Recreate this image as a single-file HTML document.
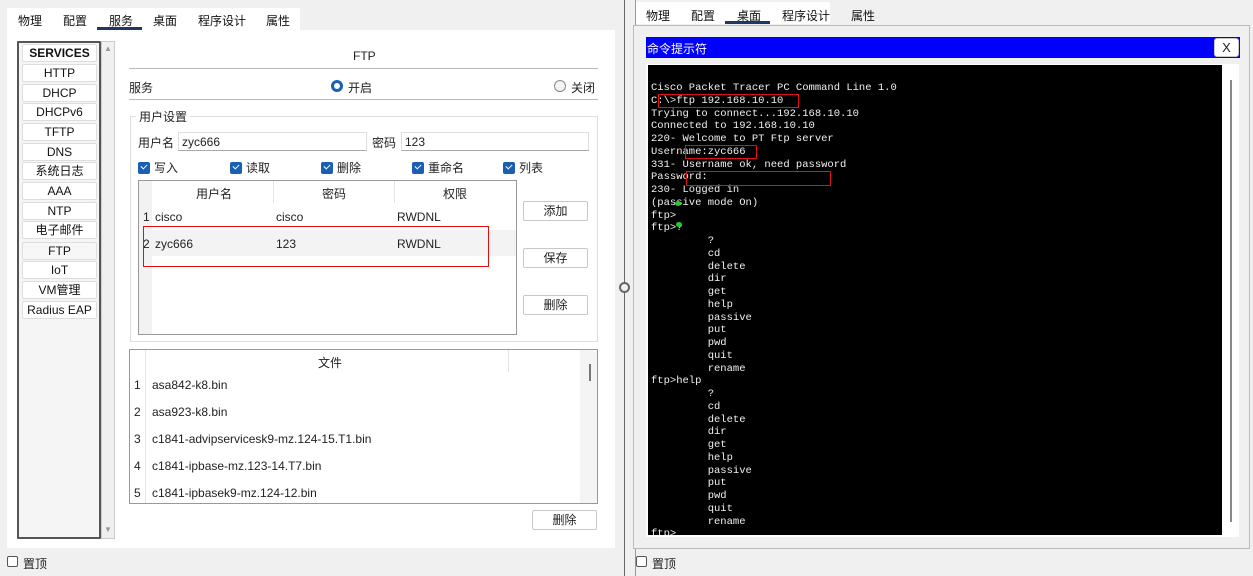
<!DOCTYPE html>
<html><head><meta charset="utf-8"><style>
*{box-sizing:border-box;margin:0;padding:0}
body{width:1253px;height:576px;background:#f0f0f0;position:relative;overflow:hidden;font-family:"Liberation Sans","Noto Sans CJK SC",sans-serif;font-size:12px;color:#222}
.a{position:absolute}
.tab{position:absolute;font-size:12px;color:#111}
.svc{position:absolute;left:22px;width:75px;height:18px;background:#fff;border:1px solid #ddd;border-radius:2px;text-align:center;font-size:12px;line-height:17px;color:#111}
.btn{position:absolute;background:#fff;border:1px solid #c8c8c8;border-radius:2px;text-align:center;font-size:12px;line-height:18px}
.cb{display:inline-block;width:12px;height:12px;background:#1a5fb4;border-radius:2px;vertical-align:-2px;margin-right:4px;position:relative}
.cb:after{content:"";position:absolute;left:3px;top:2px;width:5px;height:3px;border-left:1.5px solid #fff;border-bottom:1.5px solid #fff;transform:rotate(-45deg)}
.term{position:absolute;left:648px;top:65px;width:574px;height:470px;background:#000;overflow:hidden;font-family:"Liberation Mono",monospace;font-size:10.5px;color:#f0f0f0;white-space:pre;line-height:12.75px;padding:17px 0 0 3px}
.rb{position:absolute;border:1.5px solid #e01010}
</style></head><body>
<!-- LEFT -->
<div class="a" style="left:7px;top:8px;width:293px;height:22px;background:#fff"></div>
<div class="tab" style="left:18px;top:12px">物理</div>
<div class="tab" style="left:63px;top:12px">配置</div>
<div class="tab" style="left:109px;top:12px">服务</div>
<div class="a" style="left:97px;top:27px;width:45px;height:3px;background:#1c3966"></div>
<div class="tab" style="left:153px;top:12px">桌面</div>
<div class="tab" style="left:198px;top:12px">程序设计</div>
<div class="tab" style="left:266px;top:12px">属性</div>
<div class="a" style="left:7px;top:30px;width:608px;height:518px;background:#fff"></div>
<div class="a" style="left:17px;top:41px;width:84px;height:498px;background:#f5f5f5;border:2px solid #555;border-radius:1px"></div>
<div class="a" style="left:101px;top:41px;width:14px;height:498px;background:#f0f0f0;border:1px solid #ccc"></div>
<div class="a" style="left:104px;top:44px;font-size:8px;color:#999">▲</div>
<div class="a" style="left:104px;top:525px;font-size:8px;color:#999">▼</div>
<div class="svc" style="top:44px;font-weight:bold">SERVICES</div>
<div class="svc" style="top:64px">HTTP</div>
<div class="svc" style="top:84px">DHCP</div>
<div class="svc" style="top:103px">DHCPv6</div>
<div class="svc" style="top:123px">TFTP</div>
<div class="svc" style="top:143px">DNS</div>
<div class="svc" style="top:162px">系统日志</div>
<div class="svc" style="top:182px">AAA</div>
<div class="svc" style="top:202px">NTP</div>
<div class="svc" style="top:221px">电子邮件</div>
<div class="svc" style="top:242px;background:#f7f7f7">FTP</div>
<div class="svc" style="top:261px">IoT</div>
<div class="svc" style="top:281px">VM管理</div>
<div class="svc" style="top:301px">Radius EAP</div>

<div class="a" style="left:353px;top:49px;font-size:12px">FTP</div>
<div class="a" style="left:129px;top:68px;width:469px;height:1px;background:#bbb"></div>
<div class="a" style="left:129px;top:79px">服务</div>
<div class="a" style="left:331px;top:80px;width:12px;height:12px;border:3px solid #1a5fb4;border-radius:50%"></div>
<div class="a" style="left:348px;top:79px">开启</div>
<div class="a" style="left:554px;top:80px;width:12px;height:12px;border:1px solid #888;border-radius:50%;background:#f4f4f4"></div>
<div class="a" style="left:571px;top:79px">关闭</div>
<div class="a" style="left:129px;top:99px;width:469px;height:1px;background:#bbb"></div>

<div class="a" style="left:130px;top:116px;width:468px;height:226px;border:1px solid #ddd"></div>
<div class="a" style="left:136px;top:108px;background:#fff;padding:0 3px">用户设置</div>
<div class="a" style="left:138px;top:134px">用户名</div>
<div class="a" style="left:178px;top:132px;width:189px;height:19px;border:1px solid #ddd;border-bottom-color:#aaa;padding:2px 3px">zyc666</div>
<div class="a" style="left:372px;top:134px">密码</div>
<div class="a" style="left:401px;top:132px;width:188px;height:19px;border:1px solid #ddd;border-bottom-color:#aaa;padding:2px 3px">123</div>
<div class="a" style="left:138px;top:159px"><span class="cb"></span>写入</div>
<div class="a" style="left:230px;top:159px"><span class="cb"></span>读取</div>
<div class="a" style="left:321px;top:159px"><span class="cb"></span>删除</div>
<div class="a" style="left:412px;top:159px"><span class="cb"></span>重命名</div>
<div class="a" style="left:503px;top:159px"><span class="cb"></span>列表</div>

<div class="a" style="left:138px;top:180px;width:379px;height:155px;border:1px solid #999;background:#fff"></div>
<div class="a" style="left:139px;top:181px;width:13px;height:153px;background:#f2f2f2"></div>
<div class="a" style="left:273px;top:181px;width:1px;height:22px;background:#e4e4e4"></div>
<div class="a" style="left:394px;top:181px;width:1px;height:22px;background:#e4e4e4"></div>
<div class="a" style="left:196px;top:185px">用户名</div>
<div class="a" style="left:322px;top:185px">密码</div>
<div class="a" style="left:443px;top:185px">权限</div>
<div class="a" style="left:143px;top:210px">1</div>
<div class="a" style="left:155px;top:210px">cisco</div>
<div class="a" style="left:276px;top:210px">cisco</div>
<div class="a" style="left:397px;top:210px">RWDNL</div>
<div class="a" style="left:152px;top:230px;width:364px;height:26px;background:#f3f3f3"></div>
<div class="a" style="left:143px;top:237px">2</div>
<div class="a" style="left:155px;top:237px">zyc666</div>
<div class="a" style="left:276px;top:237px">123</div>
<div class="a" style="left:397px;top:237px">RWDNL</div>
<div class="rb" style="left:143px;top:226px;width:346px;height:41px"></div>
<div class="btn" style="left:523px;top:201px;width:65px;height:20px">添加</div>
<div class="btn" style="left:523px;top:248px;width:65px;height:20px">保存</div>
<div class="btn" style="left:523px;top:295px;width:65px;height:20px">删除</div>

<div class="a" style="left:129px;top:349px;width:469px;height:155px;border:1px solid #999;background:#fff"></div>
<div class="a" style="left:130px;top:350px;width:16px;height:153px;background:#fff;border-right:1px solid #e4e4e4"></div>
<div class="a" style="left:508px;top:350px;width:1px;height:22px;background:#e4e4e4"></div>
<div class="a" style="left:580px;top:350px;width:17px;height:153px;background:#f4f4f4"></div>
<div class="a" style="left:589px;top:364px;width:2px;height:17px;background:#777"></div>
<div class="a" style="left:318px;top:354px">文件</div>
<div class="a" style="left:134px;top:378px">1</div><div class="a" style="left:152px;top:378px">asa842-k8.bin</div>
<div class="a" style="left:134px;top:405px">2</div><div class="a" style="left:152px;top:405px">asa923-k8.bin</div>
<div class="a" style="left:134px;top:432px">3</div><div class="a" style="left:152px;top:432px">c1841-advipservicesk9-mz.124-15.T1.bin</div>
<div class="a" style="left:134px;top:459px">4</div><div class="a" style="left:152px;top:459px">c1841-ipbase-mz.123-14.T7.bin</div>
<div class="a" style="left:134px;top:486px">5</div><div class="a" style="left:152px;top:486px">c1841-ipbasek9-mz.124-12.bin</div>
<div class="btn" style="left:532px;top:510px;width:65px;height:20px">删除</div>

<div class="a" style="left:7px;top:556px;width:11px;height:11px;border:1px solid #555;border-radius:2px;background:#fff"></div>
<div class="a" style="left:23px;top:555px">置顶</div>

<!-- DIVIDER -->
<div class="a" style="left:624px;top:0;width:1px;height:576px;background:#666"></div>
<div class="a" style="left:619px;top:282px;width:11px;height:11px;border:2px solid #666;border-radius:50%;background:#f0f0f0"></div>

<!-- RIGHT -->
<div class="a" style="left:635px;top:0;width:1px;height:576px;background:#999"></div>
<div class="a" style="left:636px;top:2px;width:194px;height:22px;background:#fff"></div>
<div class="tab" style="left:646px;top:7px">物理</div>
<div class="tab" style="left:691px;top:7px">配置</div>
<div class="tab" style="left:737px;top:7px">桌面</div>
<div class="a" style="left:725px;top:21px;width:45px;height:3px;background:#1c3966"></div>
<div class="tab" style="left:782px;top:7px">程序设计</div>
<div class="tab" style="left:851px;top:7px">属性</div>
<div class="a" style="left:633px;top:25px;width:617px;height:524px;border:1px solid #bbb;background:#f0f0f0"></div>
<div class="a" style="left:646px;top:37px;width:594px;height:21px;background:#0000ff"></div>
<div class="a" style="left:647px;top:40px;color:#fff;font-size:12px">命令提示符</div>
<div class="btn" style="left:1214px;top:38px;width:25px;height:19px;border-radius:3px;font-size:13px">X</div>
<div class="a" style="left:646px;top:64px;width:593px;height:473px;background:#fff"></div>
<div class="a" style="left:1230px;top:80px;width:2px;height:442px;background:#888"></div>
<div class="term">Cisco Packet Tracer PC Command Line 1.0
C:\&gt;ftp 192.168.10.10
Trying to connect...192.168.10.10
Connected to 192.168.10.10
220- Welcome to PT Ftp server
Username:zyc666
331- Username ok, need password
Password:
230- Logged in
(passive mode On)
ftp&gt;
ftp&gt;?
         ?
         cd
         delete
         dir
         get
         help
         passive
         put
         pwd
         quit
         rename
ftp&gt;help
         ?
         cd
         delete
         dir
         get
         help
         passive
         put
         pwd
         quit
         rename
ftp&gt;</div>
<div class="rb" style="left:658px;top:94px;width:141px;height:14px"></div>
<div class="rb" style="left:685px;top:145px;width:72px;height:14px"></div>
<div class="rb" style="left:686px;top:171px;width:145px;height:15px"></div>
<div class="a" style="left:675px;top:201px;width:6px;height:5px;background:#2c2;border-radius:50%"></div>
<div class="a" style="left:676px;top:222px;width:6px;height:5px;background:#2c2;border-radius:50%"></div>
<div class="a" style="left:636px;top:556px;width:11px;height:11px;border:1px solid #555;border-radius:2px;background:#fff"></div>
<div class="a" style="left:652px;top:555px">置顶</div>
</body></html>
